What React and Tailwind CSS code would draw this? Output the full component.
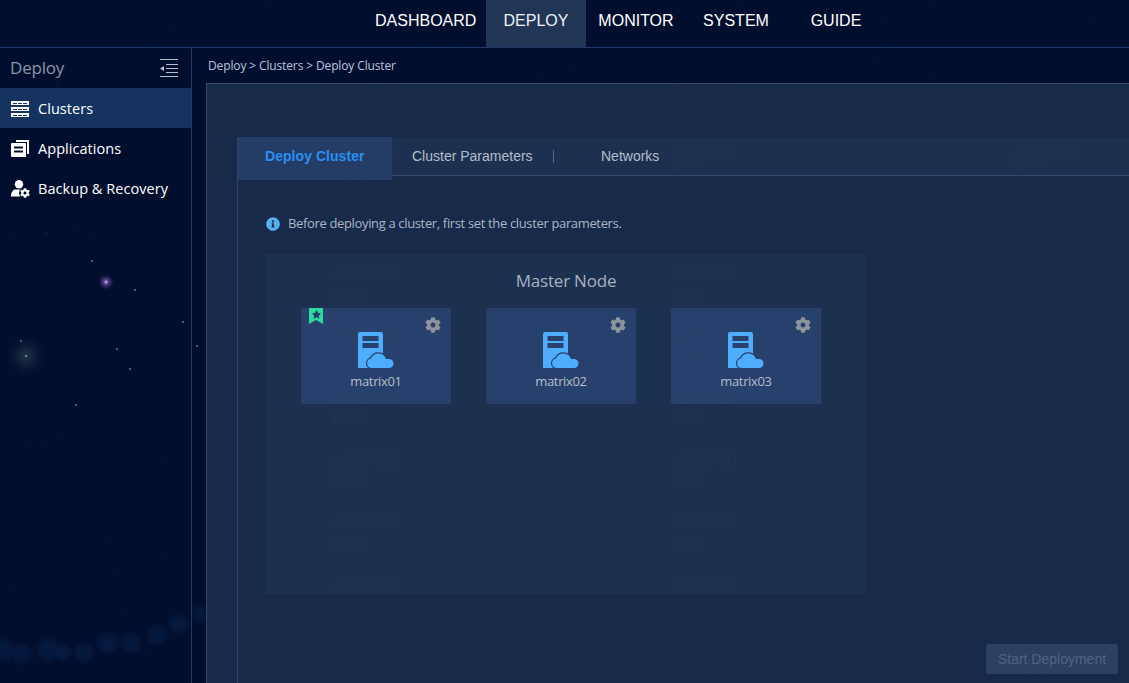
import React from 'react';
import { FaCog, FaStar, FaInfoCircle } from 'react-icons/fa';

// seeded dots for the night sky background
const rand = (seed) => {
  const x = Math.sin(seed * 127.1) * 43758.5453;
  return x - Math.floor(x);
};
const dust = Array.from({ length: 420 }, (_, i) => ({
  x: rand(i + 1) * 1129,
  y: rand(i + 501) * 683,
  r: 0.4 + rand(i + 901) * 0.5,
  o: 0.04 + rand(i + 1301) * 0.14,
}));
const stars = [
  [92, 261], [135, 290], [117, 349], [76, 405], [197, 346], [183, 322], [21, 341], [130, 369],
];
const bokeh = [
  [2, 650, 14], [22, 654, 12], [48, 650, 14], [64, 652, 10], [84, 653, 12], [108, 643, 13], [131, 643, 12], [157, 635, 12], [179, 624, 12], [201, 614, 10],
];

const navItems = ['DEPLOY', 'MONITOR', 'SYSTEM', 'GUIDE'];
const nodes = ['matrix01', 'matrix02', 'matrix03'];
const tabs = ['Cluster Parameters', 'Networks'];

function Sky() {
  return (
    <svg className="absolute inset-0" width="1129" height="683">
      <defs>
        <radialGradient id="bk">
          <stop offset="0%" stopColor="#0b3a70" stopOpacity="0.28" />
          <stop offset="60%" stopColor="#0b3a70" stopOpacity="0.2" />
          <stop offset="100%" stopColor="#0b3a70" stopOpacity="0" />
        </radialGradient>
        <radialGradient id="glowA">
          <stop offset="0%" stopColor="#e9d8ff" />
          <stop offset="25%" stopColor="#8a5fc0" stopOpacity="0.7" />
          <stop offset="100%" stopColor="#3a2a80" stopOpacity="0" />
        </radialGradient>
        <radialGradient id="glowB">
          <stop offset="0%" stopColor="#c8d8cc" />
          <stop offset="8%" stopColor="#5f7f78" stopOpacity="0.3" />
          <stop offset="100%" stopColor="#20405a" stopOpacity="0" />
        </radialGradient>
      </defs>
      {dust.map((d, i) => (
        <circle key={i} cx={d.x} cy={d.y} r={d.r} fill="#7f9cd0" opacity={d.o} />
      ))}
      {bokeh.map(([x, y, r], i) => (
        <circle key={i} cx={x} cy={y} r={r} fill="url(#bk)" />
      ))}
      {stars.map(([x, y], i) => (
        <circle key={i} cx={x} cy={y} r="0.9" fill="#a9b8d8" opacity="0.65" />
      ))}
      <circle cx="106" cy="282" r="8" fill="url(#glowA)" />
      <circle cx="26" cy="356" r="20" fill="url(#glowB)" />
    </svg>
  );
}

function ClustersIcon() {
  return (
    <svg width="18" height="16" viewBox="0 0 18 16" fill="#fff">
      <path d="M0 0h18v4H0zM0 6h18v4H0zM0 12h18v4H0z" />
      <path fill="#14335f" d="M2 2h4v1H2zM7 2h4v1H7zM12 2h4v1h-4zM2 8h4v1H2zM7 8h4v1H7zM12 8h4v1h-4zM2 14h4v1H2zM7 14h4v1H7zM12 14h4v1h-4z" />
    </svg>
  );
}

function AppsIcon() {
  return (
    <svg width="18" height="17" viewBox="0 0 18 17" fill="#fff">
      <path d="M5 0h13v14h-2V2H5z" />
      <path fillRule="evenodd" d="M1 3h13a1 1 0 0 1 1 1v13H1a1 1 0 0 1-1-1V4a1 1 0 0 1 1-1zM3 6.500v2h9v-2zM3 10.500v2h9v-2z" />
    </svg>
  );
}

function BackupIcon() {
  return (
    <span className="relative w-[19px] h-[18px]">
      <svg className="absolute inset-0" width="19" height="18" viewBox="0 0 19 18" fill="#fff">
        <circle cx="8" cy="4.200" r="4.200" />
        <path d="M4 9.500h8a4 4 0 0 1 3 2v5H0c0-3 1-6.500 4-7z" />
        <circle cx="14" cy="13" r="6" fill="#031233" />
      </svg>
      <FaCog className="absolute left-[9px] top-2 text-white" size={10} />
    </span>
  );
}

function CollapseIcon() {
  return (
    <svg width="18" height="18" viewBox="0 0 18 18" fill="#b8bec8">
      <path d="M0 0h18v1H0zM6 5h12v1H6zM6 9h12v1H6zM6 13h12v1H6zM0 17h18v1H0zM0 9.500L4 7v5z" />
    </svg>
  );
}

function NodeIcon() {
  return (
    <svg width="36" height="36" viewBox="0 0 36 36">
      <path fill="#4fadfd" d="M2 0h21a2 2 0 0 1 2 2v34H0V2a2 2 0 0 1 2-2z" />
      <path fill="#27416c" d="M4.500 4h16v5h-16zM4.500 11h16v5h-16z" />
      <path
        fill="#4fadfd"
        stroke="#27416c"
        strokeWidth="2.500"
        paintOrder="stroke"
        d="M14 36a4.800 4.800 0 0 1-1-9.500a8 8 0 0 1 15 .5h3a4.500 4.500 0 0 1 0 9z"
      />
    </svg>
  );
}

function Bookmark() {
  return (
    <div className="absolute left-2 top-0 w-[14px] h-4 text-[#27416c]">
      <svg className="absolute inset-0" width="14" height="16" viewBox="0 0 14 16">
        <path fill="#2ed9a0" d="M0 0h14v16l-7-4-7 4z" />
      </svg>
      <FaStar className="absolute left-[2.500px] top-[1.500px]" size={9} />
    </div>
  );
}

function NodeCard({ name, master }) {
  return (
    <div className="relative w-[150px] h-[96px] bg-[#27416c] rounded-[2px] flex flex-col items-center pt-6">
      {master && <Bookmark />}
      <FaCog className="absolute right-[10px] top-[9px] text-[#8e949d]" size={16} />
      <NodeIcon />
      <span className="mt-1 text-[13px] leading-[18px] text-[#b4bdcb] font-['Open_Sans',sans-serif] tracking-[-0.35px]">{name}</span>
    </div>
  );
}

function Watermark() {
  return (
    <div className="absolute inset-0 overflow-hidden pointer-events-none pl-[125px] -mt-[6px] grid grid-cols-[340px_340px_340px] auto-rows-[62px] font-['Liberation_Sans',sans-serif] text-[17px] leading-[21px] text-[#6f7480]/[0.06]">
      {Array.from({ length: 30 }, (_, i) => (
        <div key={i}>
          <div>z223730</div>
          <div>H3C</div>
        </div>
      ))}
    </div>
  );
}

export default function App() {
  return (
    <div className="relative w-full h-[683px] overflow-hidden bg-[#020e2e] font-['Liberation_Sans',sans-serif]">
      <Sky />

      {/* top nav */}
      <header className="relative h-12 border-b border-[#1e3a68] pl-[375px] flex text-white text-base">
        <a className="w-[111px] leading-[41px]">DASHBOARD</a>
        {navItems.map((item) => (
          <a
            key={item}
            className={`w-[100px] text-center leading-[41px] ${item === 'DEPLOY' ? 'bg-[#213556] text-[#eef1f5]' : ''}`}
          >
            {item}
          </a>
        ))}
      </header>

      <div className="relative flex h-[635px]">
        {/* sidebar */}
        <aside className="w-[192px] shrink-0 border-r border-[#1e3a68] font-['Open_Sans',sans-serif]">
          <div className="h-10 flex items-center justify-between pl-[10px] pr-[13px]">
            <span className="text-[17px] text-[#8b95a5] tracking-[-0.2px]">Deploy</span>
            <CollapseIcon />
          </div>
          <nav className="text-[14.500px] text-white tracking-[0.05px]">
            <a className="h-10 flex items-center gap-[9px] pl-[11px] pt-px bg-[#14335f]">
              <ClustersIcon />
              Clusters
            </a>
            <a className="h-10 flex items-center gap-[9px] pl-[11px] pt-px">
              <AppsIcon />
              Applications
            </a>
            <a className="h-10 flex items-center gap-2 pl-[11px] pt-px">
              <BackupIcon />
              Backup &amp; Recovery
            </a>
          </nav>
        </aside>

        {/* content */}
        <main className="flex-1 min-w-0 pl-[14px]">
          <div className="h-[35px] pl-[2px] flex items-center text-xs text-[#b9c6dc] font-['Open_Sans',sans-serif] tracking-[-0.13px]">
            Deploy &gt; Clusters &gt; Deploy Cluster
          </div>
          <section className="relative h-[600px] overflow-hidden bg-[#172a49] border-t border-l border-[#33496c] pl-[30px] pt-[53px]">
            <div className="relative h-[560px] border-l border-[#2f4468]">
              {/* tabs */}
              <div className="relative h-[39px] bg-[#1c3150] border-b border-[#34496c] flex text-sm text-[#b4bdcb]">
                <div className="w-[154px] h-[43px] pl-[27px] bg-[#243d66] text-[#2a8ff0] font-bold leading-[39px] tracking-[0.05px]">
                  Deploy Cluster
                </div>
                <div className="w-[162px] pl-[20px] leading-[39px] relative">
                  {tabs[0]}
                  <span className="absolute left-[161px] top-[13px] h-[13px] w-px bg-[#51659a]" />
                </div>
                <div className="pl-[47px] leading-[39px]">{tabs[1]}</div>
              </div>

              <div className="pl-[28px] pt-[40px]">
                <div className="flex items-center gap-2 h-4 text-[13px] text-[#aab6c8] font-['Open_Sans',sans-serif] tracking-[-0.35px]">
                  <FaInfoCircle className="text-[#5aaef0]" size={14} />
                  Before deploying a cluster, first set the cluster parameters.
                </div>
                <div className="mt-[22px] w-[600px] h-[340px] bg-[#1c3150] pt-[15px] px-[35px]">
                  <h2 className="text-center text-[17px] leading-6 font-normal text-[#a6b0c0] font-['Open_Sans',sans-serif] tracking-[-0.2px]">
                    Master Node
                  </h2>
                  <div className="mt-[15px] flex gap-[35px]">
                    {nodes.map((n, i) => (
                      <NodeCard key={n} name={n} master={i === 0} />
                    ))}
                  </div>
                </div>
              </div>
            </div>
            <button className="absolute left-[779px] top-[560px] w-[132px] h-[30px] rounded-[2px] bg-[#2a4162] text-sm text-[#4d6482]">
              Start Deployment
            </button>
            <Watermark />
          </section>
        </main>
      </div>
    </div>
  );
}
